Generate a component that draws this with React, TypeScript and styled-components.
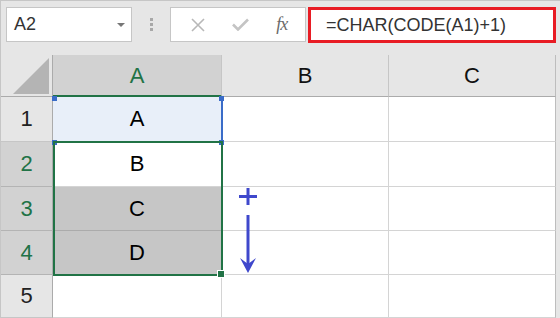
import styled, { createGlobalStyle } from 'styled-components';

const GlobalStyle = createGlobalStyle`
  html, body {
    margin: 0;
    padding: 0;
    background: #e6e6e6;
  }
  body {
    font-family: 'Liberation Sans', Arial, sans-serif;
  }
`;

const GREEN = '#217346';
const BLUE = '#3f48cc';

const Frame = styled.div`
  box-sizing: border-box;
  width: 560px;
  height: 318px;
  overflow: hidden;
  background: #e6e6e6;
  border-top: 1px solid #c6c6c6;
  border-left: 1px solid #c6c6c6;
  display: flex;
  flex-direction: column;
`;

const TopBar = styled.div`
  height: 54px;
  flex: none;
  box-sizing: border-box;
  padding: 6px 0 0 5px;
  display: flex;
  align-items: flex-start;
`;

const NameBox = styled.div`
  box-sizing: border-box;
  width: 126px;
  height: 35px;
  background: #fff;
  border: 1px solid #c6c6c6;
  display: flex;
  align-items: center;
  justify-content: space-between;
  padding: 0 6px 0 7px;
  font-size: 18px;
  color: #333;
`;

const DropArrow = styled.span`
  width: 0;
  height: 0;
  border-left: 4px solid transparent;
  border-right: 4px solid transparent;
  border-top: 4px solid #777;
  margin-top: 1px;
`;

const Dots = styled.div`
  width: 38px;
  height: 35px;
  display: flex;
  flex-direction: column;
  align-items: center;
  justify-content: center;
  gap: 2px;
`;

const Dot = styled.span`
  width: 3px;
  height: 3px;
  background: #a8a8a8;
`;

const Buttons = styled.div`
  box-sizing: border-box;
  width: 136px;
  height: 35px;
  background: #fff;
  border: 1px solid #c6c6c6;
  display: flex;
  align-items: center;
  justify-content: space-around;
  padding: 0 4px 0 6px;
`;

const Fx = styled.span`
  font-family: 'Liberation Serif', 'Times New Roman', serif;
  font-style: italic;
  font-size: 18px;
  color: #6a6a6a;
  letter-spacing: -1px;
`;

const FormulaInput = styled.div`
  box-sizing: border-box;
  margin-left: 2px;
  width: 248px;
  height: 36px;
  background: #fff;
  border: 3px solid #e81c24;
  display: flex;
  align-items: center;
  padding-left: 15px;
  font-size: 18px;
  color: #333;
`;

const Sheet = styled.div`
  position: relative;
  display: grid;
  grid-template-columns: 52px 169px 167px 167px;
  grid-template-rows: 42px 45px 45px 44px 44px 43px;
`;

const Corner = styled.div`
  box-sizing: border-box;
  border-right: 1px solid #ababab;
  border-bottom: 1px solid #ababab;
  display: flex;
  align-items: flex-end;
  justify-content: flex-end;
  padding: 0 3px 2px 0;
`;

const Triangle = styled.span`
  width: 0;
  height: 0;
  border-left: 36px solid transparent;
  border-bottom: 36px solid #b4b4b4;
`;

const ColHeader = styled.div<{ $active?: boolean; $last?: boolean }>`
  box-sizing: border-box;
  display: flex;
  align-items: center;
  justify-content: center;
  font-size: 22px;
  padding-top: ${(p) => (p.$active ? '2px' : '0')};
  background: ${(p) => (p.$active ? '#d2d2d2' : '#e6e6e6')};
  color: ${(p) => (p.$active ? GREEN : '#111')};
  border-right: 1px solid ${(p) => (p.$last ? '#bdbdbd' : '#c6c6c6')};
  border-bottom: ${(p) => (p.$active ? `2px solid ${GREEN}` : '1px solid #ababab')};
`;

const RowHeader = styled.div<{ $active?: boolean }>`
  box-sizing: border-box;
  display: flex;
  align-items: center;
  justify-content: center;
  font-size: 22px;
  background: ${(p) => (p.$active ? '#d2d2d2' : '#e6e6e6')};
  color: ${(p) => (p.$active ? GREEN : '#222')};
  border-right: 1px solid #ababab;
  border-bottom: 1px solid ${(p) => (p.$active ? '#b4b4b4' : '#c6c6c6')};
`;

const Cell = styled.div<{ $fill?: string; $last?: boolean }>`
  box-sizing: border-box;
  display: flex;
  align-items: center;
  justify-content: center;
  font-size: 22px;
  color: #000;
  background: ${(p) => p.$fill ?? '#fff'};
  border-right: 1px solid ${(p) => (p.$last ? '#bdbdbd' : '#d4d4d4')};
  border-bottom: 1px solid ${(p) => (p.$fill === '#c6c6c6' ? '#ababab' : '#d4d4d4')};
`;

const Selection = styled.div`
  position: absolute;
  left: 52px;
  top: 86px;
  width: 170px;
  height: 135px;
  box-sizing: border-box;
  border: 2px solid ${GREEN};
  pointer-events: none;
`;

const FillHandle = styled.div`
  position: absolute;
  left: 216px;
  top: 215px;
  width: 6px;
  height: 6px;
  background: ${GREEN};
  border: 1px solid #fff;
`;

const RefBox = styled.div`
  position: absolute;
  left: 52px;
  top: 42px;
  width: 170px;
  height: 45px;
  box-sizing: border-box;
  border-right: 2px solid #3a6cc8;
`;

const RefHandle = styled.span<{ $x: 'l' | 'r'; $y: 't' | 'b' }>`
  position: absolute;
  width: 5px;
  height: 5px;
  background: #3a6cc8;
  ${(p) => (p.$x === 'l' ? 'left: -1px;' : 'right: -3px;')}
  ${(p) => (p.$y === 't' ? 'top: -1px;' : 'bottom: -3px;')}
`;

const Arrow = styled.svg`
  position: absolute;
  left: 235px;
  top: 130px;
`;

const cols = ['A', 'B', 'C'];
const rows: { n: number; a: string; fill?: string; active?: boolean }[] = [
  { n: 1, a: 'A', fill: '#e8eff9' },
  { n: 2, a: 'B', active: true },
  { n: 3, a: 'C', fill: '#c6c6c6', active: true },
  { n: 4, a: 'D', fill: '#c6c6c6', active: true },
  { n: 5, a: '' },
];

export default function App() {
  return (
    <>
      <GlobalStyle />
      <Frame>
        <TopBar>
          <NameBox>
            A2
            <DropArrow />
          </NameBox>
          <Dots>
            <Dot />
            <Dot />
            <Dot />
          </Dots>
          <Buttons>
            <svg width="14" height="14" viewBox="0 0 14 14">
              <path d="M1 1 L13 13 M13 1 L1 13" stroke="#b8b8b8" strokeWidth="1.6" fill="none" />
            </svg>
            <svg width="17" height="13" viewBox="0 0 17 13">
              <path d="M1 6.5 L6 11.5 L16 1.5" stroke="#c4c4c4" strokeWidth="2.6" fill="none" />
            </svg>
            <Fx>fx</Fx>
          </Buttons>
          <FormulaInput>=CHAR(CODE(A1)+1)</FormulaInput>
        </TopBar>
        <Sheet>
          <Corner>
            <Triangle />
          </Corner>
          {cols.map((c, i) => (
            <ColHeader key={c} $active={i === 0} $last={i === cols.length - 1}>
              {c}
            </ColHeader>
          ))}
          {rows.map((r) => [
            <RowHeader key={`h${r.n}`} $active={r.active}>
              {r.n}
            </RowHeader>,
            <Cell key={`a${r.n}`} $fill={r.fill}>
              {r.a}
            </Cell>,
            <Cell key={`b${r.n}`} />,
            <Cell key={`c${r.n}`} $last />,
          ])}
          <RefBox>
            <RefHandle $x="l" $y="t" />
            <RefHandle $x="r" $y="t" />
            <RefHandle $x="l" $y="b" />
            <RefHandle $x="r" $y="b" />
          </RefBox>
          <Selection />
          <FillHandle />
          <Arrow width="24" height="91" viewBox="0 0 24 91">
            <path d="M3 11.5 H21 M12 3 V20" stroke={BLUE} strokeWidth="3" fill="none" />
            <path d="M12 30 V80" stroke={BLUE} strokeWidth="3" fill="none" />
            <path d="M4 73 L12 88 L20 73 L12 79 Z" fill={BLUE} />
          </Arrow>
        </Sheet>
      </Frame>
    </>
  );
}
